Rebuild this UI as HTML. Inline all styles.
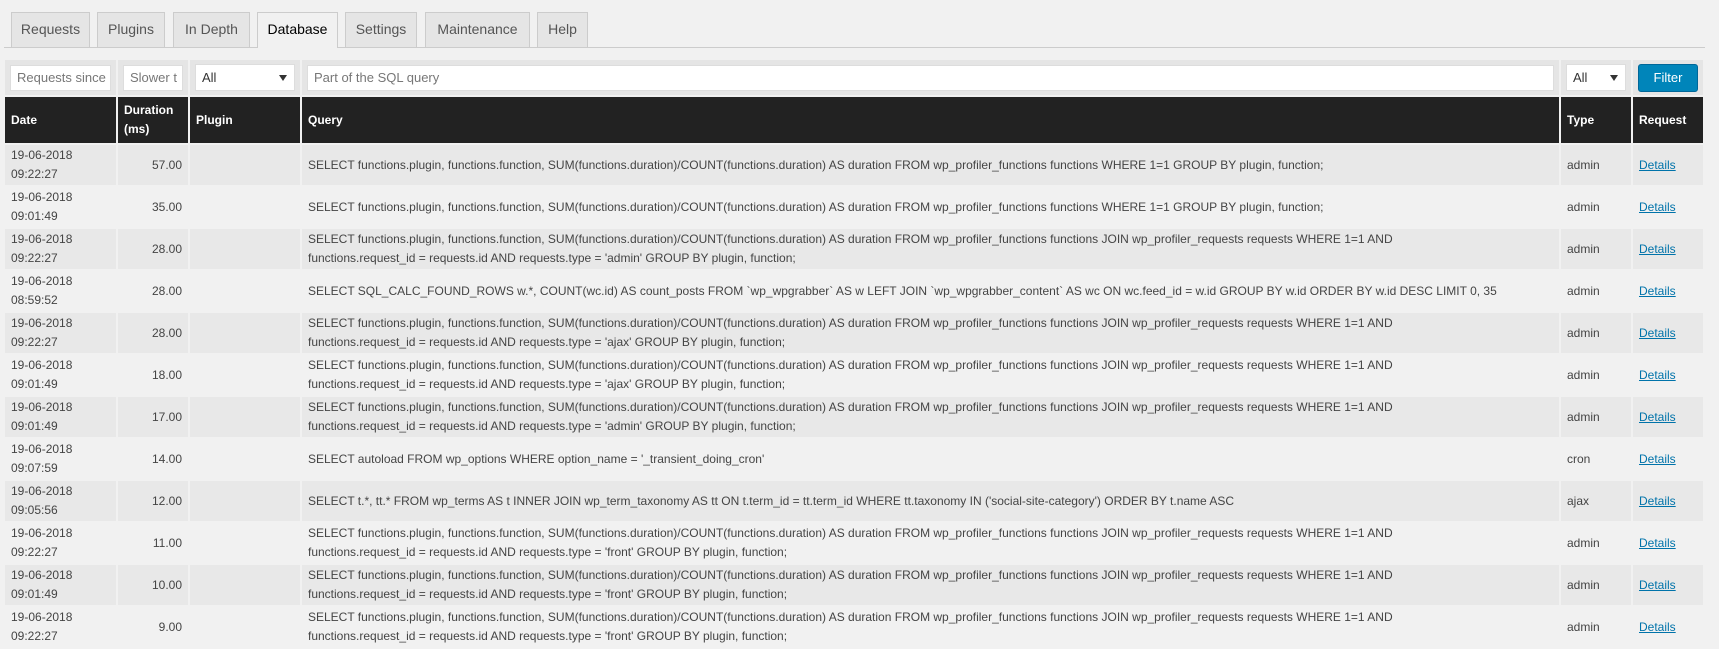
<!DOCTYPE html>
<html><head><meta charset="utf-8"><style>
body{margin:0;background:#f1f1f1;font-family:"Liberation Sans",sans-serif;font-size:12px;color:#444;width:1719px;height:618px;overflow:hidden;position:relative}
.tabs{position:absolute;top:12px;left:4px;width:1701px;height:35px;border-bottom:1px solid #ccc;}
.tab{position:absolute;top:0;border:1px solid #ccc;border-bottom:none;background:#e5e5e5;color:#555;font-size:14px;line-height:33px;text-align:center;box-sizing:border-box;height:35px}
.tab.act{background:#f1f1f1;color:#000;height:36px}
table{position:absolute;left:3px;top:58px;width:1702px;border-collapse:separate;border-spacing:2px;table-layout:fixed}
td,th{box-sizing:border-box;padding:1px 6px;white-space:nowrap;overflow:hidden;line-height:19px;text-align:left;vertical-align:middle}
th{background:#222;color:#fff;font-weight:bold;height:46px}
tr.f td{background:#e5e5e5;height:35px;padding:0 5px}
tr.s td{background:#e8e8e8}
tr.d td{height:40px}
.inp{background:#fff;border:1px solid #ddd;height:26px;box-sizing:border-box;line-height:24px;padding:0 6px;color:#777;overflow:hidden;white-space:nowrap;font-size:13px}
.sel{background:#fff;border:1px solid #ddd;height:27px;box-sizing:border-box;line-height:26px;padding:0 6px;color:#333;position:relative;font-size:13px}
.sel:after{content:"";position:absolute;right:7px;top:10px;border:4px solid transparent;border-top:6px solid #333;border-bottom:none}
.btn{background:#0085ba;border:1px solid #006799;border-radius:3px;color:#fff;height:28px;line-height:26px;text-align:center;box-sizing:border-box;font-size:13px}
.r{text-align:right}
a{color:#0073aa;text-decoration:underline}
</style></head><body>
<div class="tabs">
<div class="tab" style="left:7px;width:79px">Requests</div>
<div class="tab" style="left:93px;width:68px">Plugins</div>
<div class="tab" style="left:169px;width:77px">In Depth</div>
<div class="tab act" style="left:253px;width:81px">Database</div>
<div class="tab" style="left:341px;width:72px">Settings</div>
<div class="tab" style="left:421px;width:105px">Maintenance</div>
<div class="tab" style="left:533px;width:51px">Help</div>
</div>
<table>
<colgroup><col style="width:111px"><col style="width:70px"><col style="width:110px"><col style="width:1257px"><col style="width:70px"><col style="width:70px"></colgroup>
<tr class="f"><td><div class="inp">Requests since</div></td><td><div class="inp">Slower t</div></td><td><div class="sel">All</div></td><td><div class="inp">Part of the SQL query</div></td><td><div class="sel">All</div></td><td><div class="btn">Filter</div></td></tr>
<tr><th>Date</th><th>Duration<br>(ms)</th><th>Plugin</th><th>Query</th><th>Type</th><th>Request</th></tr>
<tr class="d s"><td>19-06-2018<br>09:22:27</td><td class="r">57.00</td><td></td><td>SELECT functions.plugin, functions.function, SUM(functions.duration)/COUNT(functions.duration) AS duration FROM wp_profiler_functions functions WHERE 1=1 GROUP BY plugin, function;</td><td>admin</td><td><a>Details</a></td></tr>
<tr class="d"><td>19-06-2018<br>09:01:49</td><td class="r">35.00</td><td></td><td>SELECT functions.plugin, functions.function, SUM(functions.duration)/COUNT(functions.duration) AS duration FROM wp_profiler_functions functions WHERE 1=1 GROUP BY plugin, function;</td><td>admin</td><td><a>Details</a></td></tr>
<tr class="d s"><td>19-06-2018<br>09:22:27</td><td class="r">28.00</td><td></td><td>SELECT functions.plugin, functions.function, SUM(functions.duration)/COUNT(functions.duration) AS duration FROM wp_profiler_functions functions JOIN wp_profiler_requests requests WHERE 1=1 AND<br>functions.request_id = requests.id AND requests.type = 'admin' GROUP BY plugin, function;</td><td>admin</td><td><a>Details</a></td></tr>
<tr class="d"><td>19-06-2018<br>08:59:52</td><td class="r">28.00</td><td></td><td>SELECT SQL_CALC_FOUND_ROWS w.*, COUNT(wc.id) AS count_posts FROM `wp_wpgrabber` AS w LEFT JOIN `wp_wpgrabber_content` AS wc ON wc.feed_id = w.id GROUP BY w.id ORDER BY w.id DESC LIMIT 0, 35</td><td>admin</td><td><a>Details</a></td></tr>
<tr class="d s"><td>19-06-2018<br>09:22:27</td><td class="r">28.00</td><td></td><td>SELECT functions.plugin, functions.function, SUM(functions.duration)/COUNT(functions.duration) AS duration FROM wp_profiler_functions functions JOIN wp_profiler_requests requests WHERE 1=1 AND<br>functions.request_id = requests.id AND requests.type = 'ajax' GROUP BY plugin, function;</td><td>admin</td><td><a>Details</a></td></tr>
<tr class="d"><td>19-06-2018<br>09:01:49</td><td class="r">18.00</td><td></td><td>SELECT functions.plugin, functions.function, SUM(functions.duration)/COUNT(functions.duration) AS duration FROM wp_profiler_functions functions JOIN wp_profiler_requests requests WHERE 1=1 AND<br>functions.request_id = requests.id AND requests.type = 'ajax' GROUP BY plugin, function;</td><td>admin</td><td><a>Details</a></td></tr>
<tr class="d s"><td>19-06-2018<br>09:01:49</td><td class="r">17.00</td><td></td><td>SELECT functions.plugin, functions.function, SUM(functions.duration)/COUNT(functions.duration) AS duration FROM wp_profiler_functions functions JOIN wp_profiler_requests requests WHERE 1=1 AND<br>functions.request_id = requests.id AND requests.type = 'admin' GROUP BY plugin, function;</td><td>admin</td><td><a>Details</a></td></tr>
<tr class="d"><td>19-06-2018<br>09:07:59</td><td class="r">14.00</td><td></td><td>SELECT autoload FROM wp_options WHERE option_name = '_transient_doing_cron'</td><td>cron</td><td><a>Details</a></td></tr>
<tr class="d s"><td>19-06-2018<br>09:05:56</td><td class="r">12.00</td><td></td><td>SELECT t.*, tt.* FROM wp_terms AS t INNER JOIN wp_term_taxonomy AS tt ON t.term_id = tt.term_id WHERE tt.taxonomy IN ('social-site-category') ORDER BY t.name ASC</td><td>ajax</td><td><a>Details</a></td></tr>
<tr class="d"><td>19-06-2018<br>09:22:27</td><td class="r">11.00</td><td></td><td>SELECT functions.plugin, functions.function, SUM(functions.duration)/COUNT(functions.duration) AS duration FROM wp_profiler_functions functions JOIN wp_profiler_requests requests WHERE 1=1 AND<br>functions.request_id = requests.id AND requests.type = 'front' GROUP BY plugin, function;</td><td>admin</td><td><a>Details</a></td></tr>
<tr class="d s"><td>19-06-2018<br>09:01:49</td><td class="r">10.00</td><td></td><td>SELECT functions.plugin, functions.function, SUM(functions.duration)/COUNT(functions.duration) AS duration FROM wp_profiler_functions functions JOIN wp_profiler_requests requests WHERE 1=1 AND<br>functions.request_id = requests.id AND requests.type = 'front' GROUP BY plugin, function;</td><td>admin</td><td><a>Details</a></td></tr>
<tr class="d"><td>19-06-2018<br>09:22:27</td><td class="r">9.00</td><td></td><td>SELECT functions.plugin, functions.function, SUM(functions.duration)/COUNT(functions.duration) AS duration FROM wp_profiler_functions functions JOIN wp_profiler_requests requests WHERE 1=1 AND<br>functions.request_id = requests.id AND requests.type = 'front' GROUP BY plugin, function;</td><td>admin</td><td><a>Details</a></td></tr>
</table>
</body></html>
